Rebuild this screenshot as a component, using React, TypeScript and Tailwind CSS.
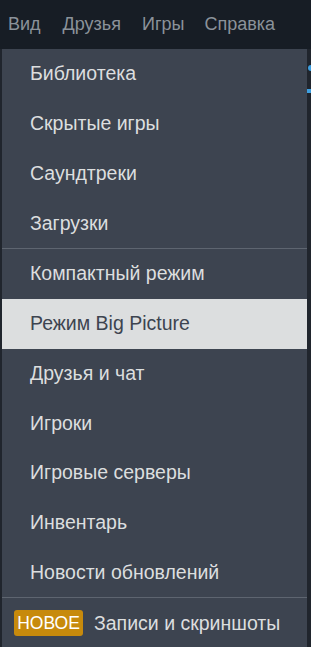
import React from 'react'

const groups: string[][] = [
  ['Библиотека', 'Скрытые игры', 'Саундтреки', 'Загрузки'],
  ['Компактный режим', 'Режим Big Picture', 'Друзья и чат', 'Игроки', 'Игровые серверы', 'Инвентарь', 'Новости обновлений'],
]

const topMenu = [
  { label: 'Вид', cls: 'ml-[8px]' },
  { label: 'Друзья', cls: 'ml-[22px]' },
  { label: 'Игры', cls: 'ml-[21px]' },
  { label: 'Справка', cls: 'ml-[20px]' },
]

export default function App() {
  const active = 'Режим Big Picture'

  return (
    <div className="w-[311px] h-[647px] overflow-hidden bg-[#1e232b] font-['Liberation_Sans',Arial,sans-serif]">
      {/* Menu bar */}
      <div className="h-[49px] bg-[#171d25] flex items-center text-[18px] text-[#8b929a]">
        {topMenu.map((m) => (
          <span key={m.label} className={m.cls}>
            {m.label}
          </span>
        ))}
      </div>

      <div className="flex">
        {/* strip behind the dropdown, left */}
        <div className="w-[2px] bg-[#20252d]" />

        {/* Dropdown */}
        <div className="w-[305px] bg-[#3d4450] text-[19.5px] text-[#dcdedf]">
          {groups.map((items, gi) => (
            <div key={gi} className="border-b border-[#5e6570]">
              {items.map((label) => (
                <div
                  key={label}
                  className={`h-[49.75px] flex items-center pl-[28px] ${
                    label === active ? 'bg-[#dcdedf] text-[#3d4450]' : ''
                  }`}
                >
                  {label}
                </div>
              ))}
            </div>
          ))}
          <div className="h-[50px] flex items-center pl-[12px] gap-[11px]">
            <span className="h-[26px] w-[69px] flex items-center justify-center rounded-[3px] bg-[#c78a0c] text-white text-[17.5px]">
              НОВОЕ
            </span>
            <span>Записи и скриншоты</span>
          </div>
        </div>

        {/* strip behind the dropdown, right */}
        <div className="w-[4px] bg-[#20252d] flex flex-col">
          <div className="mt-[16px] h-[6px] w-[3px] ml-[1px] bg-[#3d9fe0] rounded-l-full" />
          <div className="mt-[18px] h-[4px] bg-[#3d9fe0]" />
        </div>
      </div>
    </div>
  )
}
